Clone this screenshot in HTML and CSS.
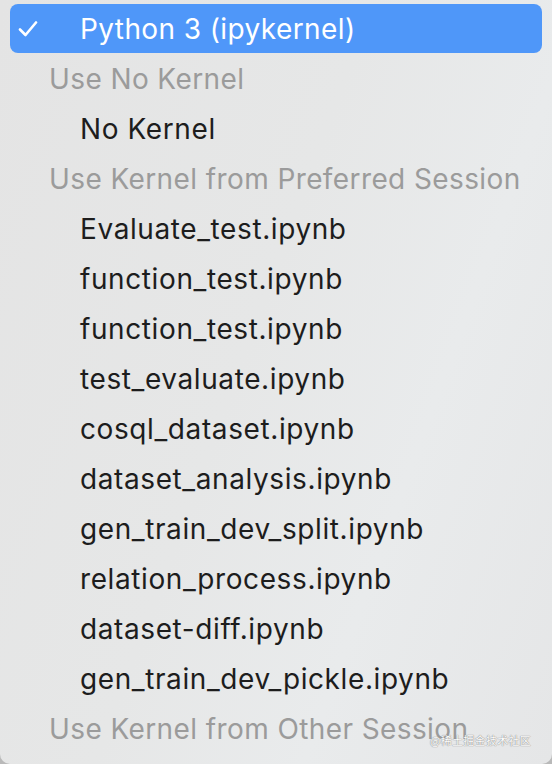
FILE: index.html
```html
<!DOCTYPE html>
<html lang="en">
<head>
<meta charset="utf-8">
<title>Kernel menu</title>
<link rel="stylesheet" href="styles.css">
</head>
<body>
<div class="menu">
  <div class="row selected">
    <span class="check">
      <svg width="20" height="16" viewBox="0 0 20 16"><path d="M2 8.5 L7.5 14 L18 1.5" fill="none" stroke="#fff" stroke-width="2.6" stroke-linecap="round" stroke-linejoin="round"/></svg>
    </span>
    <span class="label">Python 3 (ipykernel)</span>
  </div>
  <div class="row header"><span class="label">Use No Kernel</span></div>
  <div class="row item"><span class="label">No Kernel</span></div>
  <div class="row header"><span class="label">Use Kernel from Preferred Session</span></div>
  <div class="row item"><span class="label">Evaluate_test.ipynb</span></div>
  <div class="row item"><span class="label">function_test.ipynb</span></div>
  <div class="row item"><span class="label">function_test.ipynb</span></div>
  <div class="row item"><span class="label">test_evaluate.ipynb</span></div>
  <div class="row item"><span class="label">cosql_dataset.ipynb</span></div>
  <div class="row item"><span class="label">dataset_analysis.ipynb</span></div>
  <div class="row item"><span class="label">gen_train_dev_split.ipynb</span></div>
  <div class="row item"><span class="label">relation_process.ipynb</span></div>
  <div class="row item"><span class="label">dataset-diff.ipynb</span></div>
  <div class="row item"><span class="label">gen_train_dev_pickle.ipynb</span></div>
  <div class="row header"><span class="label">Use Kernel from Other Session</span></div>
  <div class="watermark">@稀土掘金技术社区</div>
</div>
</body>
</html>
```
FILE: styles.css
```css
html, body {
  margin: 0;
  padding: 0;
  background: #b9b9b9;
}
body {
  width: 552px;
  height: 764px;
  overflow: hidden;
  font-family: Inter, "Liberation Sans", Arial, "Noto Sans CJK SC", sans-serif;
}
.menu {
  position: relative;
  width: 552px;
  height: 764px;
  box-sizing: border-box;
  padding-top: 4px;
  background: linear-gradient(110deg, #e4e4e4 0%, #e6e7e7 45%, #e9ebec 70%, #e5e6e7 100%);
  border-radius: 0 0 10px 10px;
  overflow: hidden;
}
.row {
  height: 50px;
  display: flex;
  align-items: center;
  font-size: 28px;
  letter-spacing: 0.4px;
  white-space: nowrap;
}
.row .label {
  padding-left: 80px;
}
.row.header .label {
  padding-left: 49px;
  color: #9b9b9b;
}
.row.item .label {
  color: #1d1d1d;
  letter-spacing: 0.6px;
}
.row.selected {
  margin: 0 10px 0 10px;
  height: 49px;
  margin-bottom: 1px;
  background: #4f97f9;
  border-radius: 8px;
  color: #fff;
}
.row.selected .label {
  padding-left: 0;
}
.check {
  width: 70px;
  padding-left: 8px;
  box-sizing: border-box;
  display: flex;
  align-items: center;
}
.watermark {
  position: absolute;
  left: 430px;
  top: 732px;
  font-size: 11px;
  letter-spacing: 0.3px;
  color: #fbfbfb;
  text-shadow: 0 0 1px #8a8a8a, 0 0 1px #8a8a8a;
  font-family: "Noto Sans CJK SC", sans-serif;
}
```
